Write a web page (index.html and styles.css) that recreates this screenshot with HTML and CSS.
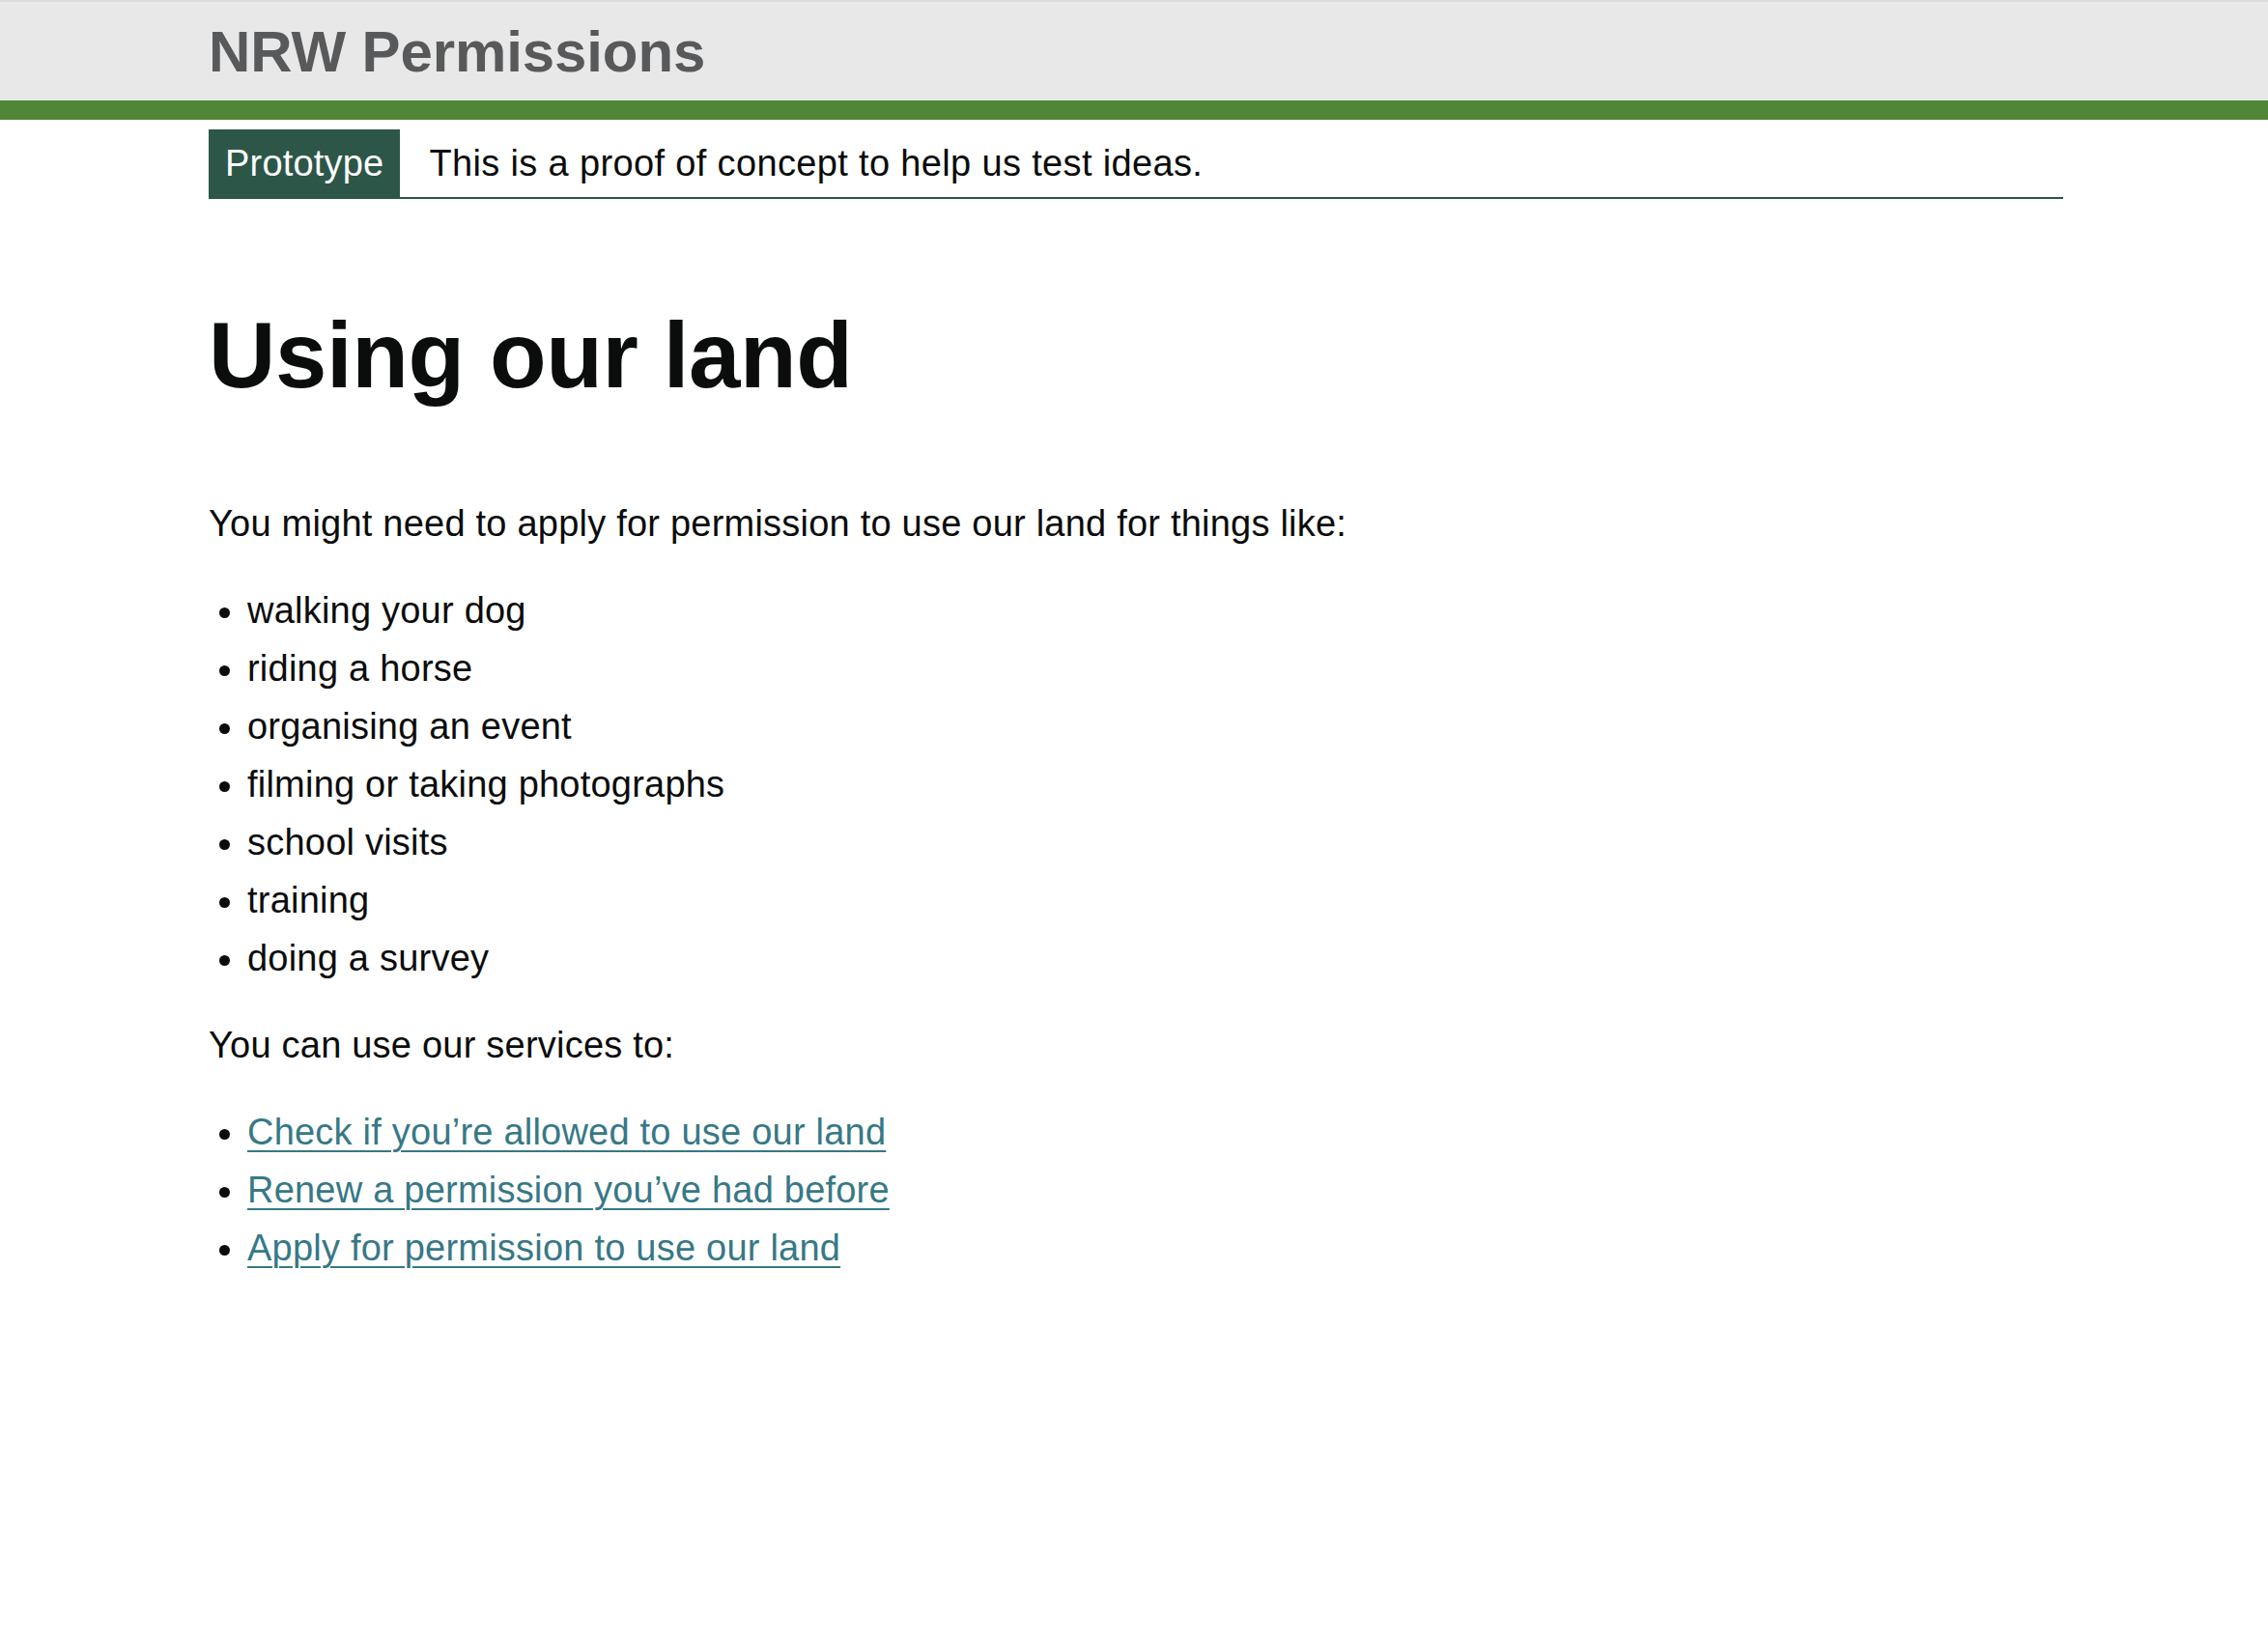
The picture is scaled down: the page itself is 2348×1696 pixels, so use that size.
FILE: index.html
```html
<!DOCTYPE html>
<html lang="en">
<head>
<meta charset="utf-8">
<title>Using our land - NRW Permissions</title>
<link rel="stylesheet" href="styles.css">
</head>
<body>
<header class="site-header">
  <div class="width-container header-inner">
    <a class="header-title" href="#">NRW Permissions</a>
  </div>
</header>
<div class="header-stripe"></div>
<div class="width-container">
  <div class="phase-banner">
    <strong class="phase-tag">Prototype</strong>
    <span class="phase-text">This is a proof of concept to help us test ideas.</span>
  </div>
  <main class="main-wrapper">
    <h1 class="heading-xl">Using our land</h1>
    <p class="body">You might need to apply for permission to use our land for things like:</p>
    <ul class="list list-bullet">
      <li>walking your dog</li>
      <li>riding a horse</li>
      <li>organising an event</li>
      <li>filming or taking photographs</li>
      <li>school visits</li>
      <li>training</li>
      <li>doing a survey</li>
    </ul>
    <p class="body">You can use our services to:</p>
    <ul class="list list-bullet">
      <li><a class="link" href="#">Check if you’re allowed to use our land</a></li>
      <li><a class="link" href="#">Renew a permission you’ve had before</a></li>
      <li><a class="link" href="#">Apply for permission to use our land</a></li>
    </ul>
  </main>
</div>
</body>
</html>
```

FILE: styles.css
```css
html, body {
  margin: 0;
  padding: 0;
  background: #ffffff;
}

body {
  font-family: "Liberation Sans", Arial, Helvetica, sans-serif;
  color: #0b0c0c;
  font-size: 38px;
  line-height: 50px;
  letter-spacing: 0.22px;
}

.width-container {
  width: 1920px;
  margin-left: 216px;
}

.site-header {
  background: #e8e8e8;
  border-top: 2px solid #dcdcdc;
  height: 102px;
  box-sizing: content-box;
}

.header-inner {
  padding-top: 22px;
}

.header-title {
  display: inline-block;
  font-size: 60px;
  line-height: 60px;
  font-weight: 700;
  color: #58595b;
  text-decoration: none;
  letter-spacing: -0.1px;
}

.header-stripe {
  height: 20px;
  background: #4f8638;
}

.phase-banner {
  display: flex;
  align-items: baseline;
  padding-top: 10px;
  border-bottom: 2px solid #2c5648;
}

.phase-tag {
  font-weight: 400;
  background: #2c5648;
  color: #ffffff;
  padding: 10px 17px;
  line-height: 50px;
  margin-right: 30px;
  letter-spacing: 0.2px;
}

.phase-text {
  line-height: 50px;
  letter-spacing: 0.35px;
}

.main-wrapper {
  padding-top: 112px;
  padding-bottom: 80px;
}

.heading-xl {
  font-size: 96px;
  line-height: 100px;
  font-weight: 700;
  margin: 0 0 99px 0;
  letter-spacing: -0.4px;
}

.body {
  margin: 0 0 40px 0;
}

.list {
  margin: 0 0 40px 0;
  padding: 0;
}

.list-bullet {
  padding-left: 40px;
  list-style-type: disc;
}

.list > li {
  margin-bottom: 10px;
}

.list > li:last-child {
  margin-bottom: 0;
}

.link {
  color: #377886;
  text-decoration: underline;
  text-decoration-thickness: 2px;
  text-underline-offset: 6px;
}
```
